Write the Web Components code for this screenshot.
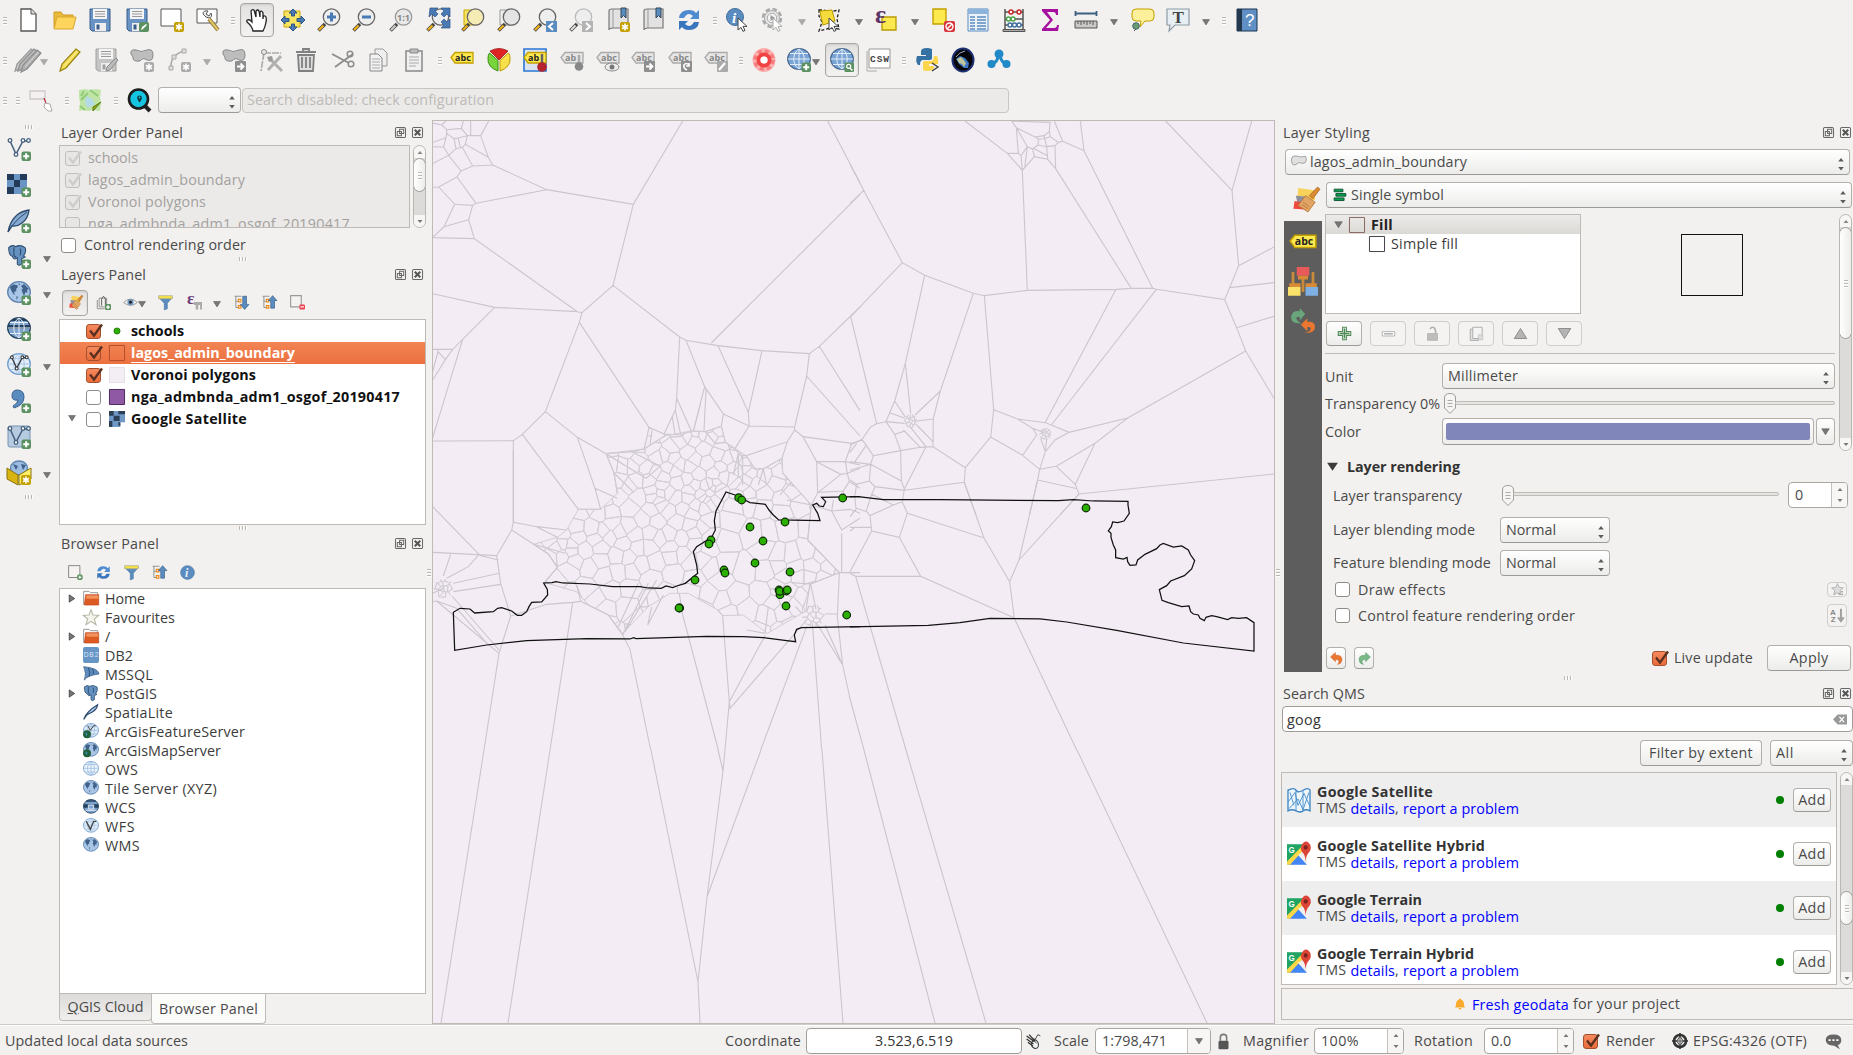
<!DOCTYPE html>
<html lang="en">
<head>
<meta charset="utf-8">
<title>QGIS</title>
<style>
html,body{margin:0;height:100%;overflow:hidden;background:#f2f1ef}
body{font-family:"Open Sans","Noto Sans",sans-serif;font-size:14px;color:#4a4a4a}
</style>
</head>
<body>
<q-window></q-window>
<script>
const FONT='"Open Sans","Noto Sans",sans-serif';
const def=(name,css,html)=>customElements.define(name,class extends HTMLElement{
  connectedCallback(){
    if(this.shadowRoot)return;
    const root=this.attachShadow({mode:'open'});
    root.innerHTML=`<style>:host{display:block;box-sizing:border-box}*{box-sizing:border-box}${css}</style>${html(this)}`;
  }
});
const at=(el,n,d='')=>el.hasAttribute(n)?el.getAttribute(n):d;

/* ---------- text label: spreads its letters over a given advance width ---------- */
const ctx=document.createElement('canvas').getContext('2d');
def('q-text','',el=>{
  const size=at(el,'s','14.3'),bold=el.hasAttribute('b')?700:400,w=+at(el,'w','0'),t=el.textContent;
  let ls=0;
  if(w){ctx.font=`${bold} ${size}px ${FONT}`;ls=(w-ctx.measureText(t).width)/t.length;}
  return `<style>:host{display:inline-block;flex:none;white-space:pre;line-height:18px;font-weight:${bold};font-size:${size}px;letter-spacing:${ls.toFixed(3)}px}</style><slot></slot>`;
});

/* ---------- icons, all on a 24x24 grid ---------- */
const plus='<rect x="14.5" y="14.5" width="9.5" height="9.5" rx="2" fill="#5b9160"/><path d="M19.2 16.3v6M16.2 19.3h6" stroke="#fff" stroke-width="2"/>';
const star='<rect x="14" y="14" width="10" height="10" rx="2" fill="#c4a000"/><path d="M19 15.5v7M16 17.2l6 3.6M22 17.2l-6 3.6" stroke="#fff" stroke-width="1.6"/>';
const gstar=star.replace('#c4a000','#aaa');
const lens=(f,s='#666',h='#f0b418')=>`<path d="M8 16L1.500 22.500" stroke="#444" stroke-width="3.600"/><path d="M6.500 17.500L2 22" stroke="${h}" stroke-width="2.200"/><circle cx="14.500" cy="9" r="8.200" fill="${f}" stroke="${s}" stroke-width="1.300"/>`;
const floppy=(c,d)=>`<path d="M2 1h20v22H4l-2-2z" fill="${c}" stroke="${d}"/><path d="M5 1h14v10H5z" fill="#f4f4f4"/><path d="M7 3.500h10M7 6h10M7 8.500h10" stroke="#999"/><path d="M7 15h11v8H7z" fill="#eee"/><path d="M8.500 16.500h3v5h-3z" fill="${d}"/>`;
const tag=(f,s,t='abc',c='#222')=>`<path d="M1 9.500L5 4.500h18v10.500H5z" fill="${f}" stroke="${s}" stroke-width="1.300"/><text x="5" y="13" font-family="Open Sans" font-weight="700" font-size="9" fill="${c}">${t}</text>`;
const gtag=tag('#e6e6e6','#aaa','abc','#888');
const globe=(f,s)=>`<ellipse cx="12" cy="11" rx="11.300" ry="10.300" fill="${f}" stroke="${s}" stroke-width="1.300"/>`;
const lats=c=>`<path d="M1 11h22M3 5.500h18M3 16.500h18M12 1v20M12 1C5 5 5 17 12 21M12 1c7 4 7 16 0 20" fill="none" stroke="${c}"/>`;
const land=c=>`<path d="M3 6l3-2.500 4 .5 1 2-2 2 .5 2-2.500 1 1 3-2-1.500L4 9zM14 5l3-2 2 2 3 3-2 1 .5 3-2-1-1.500 4-1.500-3.500-1-3 1.500-1zM9.500 15l1.500 1-1.500 3zM11 3l1.500-.5.5 2z" fill="${c}"/>`;
const vee=c=>`<path d="M3 4l6 13 7-13h5" fill="none" stroke="${c}" stroke-width="1.500"/><g fill="#fff" stroke="${c}" stroke-width="1.300"><circle cx="3" cy="3.500" r="1.800"/><circle cx="9" cy="17.500" r="1.800"/><circle cx="16" cy="3.500" r="1.800"/><circle cx="21.500" cy="3.500" r="1.800"/></g>`;
const cursor='<path d="M12 10v12l3-2.600 2 4 2-1-2-4h4z" fill="#fff" stroke="#444"/>';
const elephant='<path d="M2 3Q6-1 10 2Q15-1 21 3Q23 8 19 13l2 1-4 2v6q-3 3-5 0v-7Q8 18 6 13Q2 12 2 3z" fill="#6592c0" stroke="#2c4c70" stroke-width="1.200"/><path d="M8 3v8q0 3 3 3M15 4q2 3 0 8" fill="none" stroke="#2c4c70" stroke-width="1.300"/>';
const feather='<path d="M1 23Q3 12 10 6Q15 2 22 1Q21 10 15 14Q10 18 5 17z" fill="#86a9d2" stroke="#2c4a6c" stroke-width="1.300"/><path d="M1 23Q7 12 20 3" stroke="#2c4a6c" fill="none"/>';
const thin='<path d="M1 23Q5 11 22 1Q21 8 14 12Q8 15 6 16z" fill="#a9c5e6" stroke="#2c4a6c" stroke-width="1.800"/>';
const arrows2='<path d="M2 10Q3 2 12 2q5 0 7 3l3-3v9h-9l3-3q-5-5-9 2z" fill="#4f8bd0"/><path d="M22 14q-1 8-10 8-5 0-7-3l-3 3v-9h9l-3 3q5 5 9-2z" fill="#3a76bd"/>';
const funnel='<path d="M1 4h22l-8 9v9l-5 2V13z" fill="#5b8cc0" stroke="#44709d" stroke-width=".8"/><path d="M1 1h22v5H1z" fill="#f4e04a" stroke="#999" stroke-width=".8"/>';
const tree=u=>`<path d="M1 2h11M3 2v18h5M3 10h5" stroke="#777" fill="none" stroke-width="1.200"/><path d="M7 7h4v4H7zM7 17h4v4H7z" fill="#fff" stroke="#ee8a18" stroke-width="1.800"/>`+(u?'<path d="M17 1l7 8h-4v12h-6V9h-4z" fill="#5b8cc0" stroke="#2f567f"/>':'<path d="M17 23l7-8h-4V2h-6v13h-4z" fill="#5b8cc0" stroke="#2f567f"/>');
const folder='<path d="M1 22V2h8l2 2h11v6" fill="#fff" stroke="#999" stroke-width="1.500"/><path d="M4 7h19.500v15.500H2z" fill="#dd5a22" stroke="#c0431a" stroke-width="1"/><path d="M5 8h18v5H5z" fill="#f0935c"/>';
const blob=c=>`<path d="M1 6Q0 1 6 2Q11 5 17 2Q23 0 23 7Q23 14 17 12Q13 9 10 13Q2 14 3 9z" fill="${c}" stroke="#888"/>`;
const page='<path d="M5 1h10l5 5v17H5z" fill="#fff" stroke="#555" stroke-width="1.300"/><path d="M15 1v5h5" fill="#ddd" stroke="#555"/>';
const book='<path d="M3 3q0-2 3-2h16v19H7q-4 0-4 2z" fill="#e2e2e2" stroke="#777" stroke-width="1.200"/><path d="M7 1v19" stroke="#999"/><path d="M15 0h5v10l-2.500-2.500L15 10z" fill="#5b8cc0" stroke="#345"/>';
const pal='<path d="M6 1l13 2 1 9-15 0z" fill="#f8d25a"/><path d="M4 8l10 1 3 7-11 2z" fill="#8d8f9c"/><path d="M3 13l6 1 6 7-13-1z" fill="#ee4a3c"/><path d="M22 0l2 2-6 9-3-3z" fill="#d88a34" stroke="#a8641c" stroke-width=".6"/><path d="M12 8l8 6-6 9-8-6z" fill="#e2a565" stroke="#b77a3a" stroke-width=".8"/><path d="M10 14l5 4M9 16l5 4" stroke="#b77a3a" stroke-width=".8"/>';
const pencil=(a,b)=>`<path d="M18 1l4 3L8 20l-6 3 2-7z" fill="${a}" stroke="${b}" stroke-width="1.200"/><path d="M19.500 3L6 18" stroke="#fff" stroke-opacity=".5"/>`;
const I={
 file:page,
 open:'<path d="M2 20V4h7l2 3h10v3" fill="#e8b93c" stroke="#d09a20"/><path d="M5 9h19l-3 12H2z" fill="#fdd45c" stroke="#dca62c"/>',
 save:floppy('#6893c4','#385d8a'),
 saveas:floppy('#6893c4','#385d8a')+'<rect x="14" y="14" width="10" height="10" rx="2" fill="#5b9160"/><path d="M16 22l1-3 4-3 1 1-4 4z" fill="#fff"/>',
 newcomp:'<path d="M1 1h20v17H1z" fill="#fff" stroke="#555"/>'+star,
 composer:'<path d="M1 1h20v14H1z" fill="#fff" stroke="#555"/><path d="M7 6q0-4 5-3l-2 3 3 2 2-3q2 4-2 5L10 9z" fill="#eee" stroke="#555"/><path d="M13 11l9 11" stroke="#8d7830" stroke-width="4"/><path d="M13 11l9 11" stroke="#e2c66e" stroke-width="2"/>',
 hand:'<path d="M8 23q-1-5-6-9q-1-3 3-2l2 2L6 3q1-2 3-1l2 7V3q2-2 3 0l1 6V4q2-2 3 1v6q0-4 2-3 2 1 1 6-1 6-3 9z" fill="#fff" stroke="#222" stroke-width="1.300"/>',
 panmap:'<path d="M3 3h16v16H3z" fill="#f7e463" stroke="#c9a800"/><path d="M12 1l4 4h-2.500v3h-3V5H8zM12 23l4-4h-2.500v-3h-3v3H8zM0 12l4-4v2.500h4v3H4V16zM24 12l-4-4v2.500h-4v3h4V16z" fill="#4a7ab5" stroke="#2e5487"/>',
 zin:lens('#eee')+'<path d="M14.500 4.500v9M10 9h9" stroke="#4a7ab5" stroke-width="3"/>',
 zout:lens('#eee')+'<path d="M10 9h9" stroke="#4a7ab5" stroke-width="3"/>',
 z11:lens('#e8e8e8','#999','#ccc')+'<text x="8" y="12.500" font-size="9" font-family="Open Sans" font-weight="700" fill="#888">1:1</text>',
 zfull:lens('#eee')+'<path d="M4 0h8L9 3l3 3-3 3-3-3-3 3zM24 0v9l-3-3-3 3-3-3 3-3-3-3zM24 20h-9l3-3-3-3 3-3 3 3 3-3z" fill="#4a7ab5" stroke="#2e5487" stroke-width=".7"/>',
 zsel:'<path d="M3 2h13v15H3z" fill="#f7e463" stroke="#c9a800"/>'+lens('#f4ecb4'),
 zlay:'<path d="M3 2h13v15H3z" fill="#eee" stroke="#999"/>'+lens('#e4e4e4'),
 zlast:lens('#eee')+'<path d="M13 13h11v11H13z" fill="#5b8cc0"/><path d="M20 15l-4 3.500 4 3.500" fill="none" stroke="#fff" stroke-width="2"/>',
 znext:lens('#eee','#bbb','#ddd')+'<path d="M13 13h11v11H13z" fill="#b4b4b4"/><path d="M17 15l4 3.500-4 3.500" fill="none" stroke="#fff" stroke-width="2"/>',
 newbook:book+star, book, refresh:arrows2,
 identify:'<circle cx="9" cy="9" r="8.500" fill="#5b8cc0" stroke="#44709d"/><text x="6" y="14.500" font-size="15" font-style="italic" font-weight="700" font-family="Liberation Serif" fill="#fff">i</text>'+cursor,
 gear:'<circle cx="11" cy="10" r="9" fill="none" stroke="#aaa" stroke-width="2.500" stroke-dasharray="4.500 2.600"/><circle cx="11" cy="10" r="7.500" fill="#e6e6e6" stroke="#aaa"/><circle cx="11" cy="10" r="4.800" fill="#f2f2f2" stroke="#aaa"/><path d="M9.500 7l4.500 3-4.500 3z" fill="#999"/>'+cursor.replace('#444','#aaa'),
 select:'<path d="M2 2h5l5 2 10-2-2 9 2 10-9-1-11 3 3-9-3-6z" fill="none" stroke="#222" stroke-width="1.300" stroke-dasharray="3 2"/><path d="M3 3l12-1 3 11-12 4-2-8z" fill="#f5dc3c" stroke="#b99a00"/>'+cursor,
 selexp:'<path d="M7 9h14v13H7z" fill="#fce94f" stroke="#b99a00" stroke-width="1.300"/><text x="0" y="15" font-size="26" font-weight="700" font-family="Liberation Serif" fill="#5c3566">ε</text>',
 desel:'<path d="M2 1h13v15H2z" fill="#fce94f" stroke="#c4a000" stroke-width="1.400"/><rect x="13" y="13" width="11" height="11" rx="2" fill="#d8343c"/><circle cx="18.500" cy="18.500" r="3.500" fill="none" stroke="#fff" stroke-width="1.400"/><path d="M16 21l5-5" stroke="#fff" stroke-width="1.400"/>',
 table:'<path d="M2 1h20v22H2z" fill="#eaf1f8" stroke="#5b8cc0"/><path d="M2 1h20v5H2z" fill="#8fb4dc"/><path d="M4 9h5M11 9h9M4 12h5M11 12h9M4 15h5M11 15h9M4 18h5M11 18h9M4 21h5M11 21h9" stroke="#5b8cc0" stroke-width="1.400"/>',
 abacus:'<path d="M3 1v21M21 1v21M3 4h18M3 11h18M3 17h18" stroke="#555" stroke-width="1.500"/><path d="M1 21.500h22v2H1z" fill="#aaa" stroke="#555"/><g fill="#fff" stroke-width="1.500"><g stroke="#cc2222"><circle cx="9" cy="4" r="2"/><circle cx="17" cy="4" r="2"/></g><g stroke="#4aa44a"><circle cx="6.500" cy="11" r="2"/><circle cx="11" cy="11" r="2"/></g><g stroke="#3f6f9f"><circle cx="8" cy="17" r="2"/><circle cx="12.500" cy="17" r="2"/><circle cx="17" cy="17" r="2"/></g></g>',
 sigma:'<path d="M4 1h16v6h-2q0-3-3-3H9l6 8-7 8h8q3 0 3-3h2l-1 6H4v-2l8-9-8-9z" fill="#a6109e"/>',
 ruler:'<path d="M1 5.500h22M1.500 3v5M22.500 3v5" stroke="#3d6080" stroke-width="1.800"/><path d="M1 13h22v7H1z" fill="#c8c8c8" stroke="#555"/><path d="M4 13v3M7 13v4M10 13v3M13 13v4M16 13v3M19 13v4" stroke="#555"/>',
 tip:'<path d="M6 1h14q4 0 4 4v4q0 4-4 4h-5l-5 6 1-6H6q-4 0-4-4V5q0-4 4-4z" fill="#fdf09a" stroke="#c4a000"/><circle cx="6" cy="18" r="3.300" fill="#6a9b6e" stroke="#467"/><path d="M6 21l-2 2" stroke="#555"/>',
 textann:'<path d="M1 1h22v16H9l-6 6 1-6H1z" fill="#e8eff3" stroke="#8c9ba5" stroke-width="1.200"/><text x="6.500" y="15" font-size="17" font-family="Liberation Serif" font-weight="700" fill="#444">T</text>',
 help:'<path d="M2 1h20v22H2z" fill="#5f8fc4" stroke="#1d3450"/><path d="M2 1h5v22H2z" fill="#22384f"/><text x="10" y="18" font-size="17" font-family="Liberation Sans" fill="#fff">?</text>',
 pencils:'<g transform="translate(-3 0)">'+pencil('#c4c4c4','#999')+'</g><g>'+pencil('#b8b8b8','#909090')+'</g><g transform="translate(3 1)">'+pencil('#b0b0b0','#8c8c8c')+'</g>',
 pencil:pencil('#f4dd52','#9a8414'),
 savegrey:floppy('#c4c4c4','#a0a0a0')+'<path d="M22 10l2 2-8 10-4 1 1-4z" fill="#bbb" stroke="#888"/>',
 addpoly:blob('#bdbdbd')+gstar,
 addcurve:'<path d="M4 20Q3 7 17 3" fill="none" stroke="#aaa" stroke-width="1.500"/><path d="M2 18h4v4H2zM15 1h4v4h-4zM5 7h4v4H5z" fill="#ddd" stroke="#aaa"/>'+gstar,
 movef:blob('#bdbdbd')+'<rect x="13" y="13" width="11" height="11" rx="1" fill="#8e8e8e"/><path d="M15 18.500h6M18.500 15.500l3 3-3 3" stroke="#fff" stroke-width="1.800" fill="none"/>',
 node:'<path d="M5 5h17M5 5L2 23" stroke="#aaa" stroke-width="1.600" stroke-dasharray="7 1"/><circle cx="5" cy="4" r="2.500" fill="#e8e8e8" stroke="#888"/><path d="M9 22L22 8M12 12l11 11" stroke="#b0b0b0" stroke-width="3"/><path d="M8 9l5-1 1 4-4 2z" fill="#999"/>',
 trash:'<path d="M4 7h16l-1 16H5zM2 4h20M9 3V1h6v2" fill="#ddd" stroke="#808080" stroke-width="1.800"/><path d="M8 9v11M12 9v11M16 9v11" stroke="#808080" stroke-width="1.800"/>',
 cut:'<path d="M1 6l17 9M4 19L22 6" stroke="#8c8c8c" stroke-width="1.800"/><circle cx="20" cy="16" r="2.800" fill="none" stroke="#8c8c8c" stroke-width="1.500"/><circle cx="19" cy="6" r="2.800" fill="none" stroke="#8c8c8c" stroke-width="1.500"/>',
 copy:'<path d="M9 1h8l4 4v13H9z" fill="#eee" stroke="#999"/><path d="M4 6h8l4 4v13H4z" fill="#f2f2f2" stroke="#888"/><path d="M6 11h8M6 14h8M6 17h8M6 20h8" stroke="#aaa"/>',
 paste:'<path d="M4 3h16v20H4z" fill="#f0f0f0" stroke="#888" stroke-width="1.500"/><path d="M8 1h8v4H8z" fill="#bbb" stroke="#888"/><path d="M7 9h10M7 12h10M7 15h10M7 18h7" stroke="#aaa"/>',
 label:tag('#fce94f','#c4a000'),
 pie:'<path d="M12 12L3 3Q12-2 21 3z" fill="#e02424" stroke="#9c1414" stroke-width=".8"/><path d="M11 12.500V23Q0 19 1 10 1 7 2.500 5z" fill="#78d43a" stroke="#3c8c14"/><path d="M13 12.500V23q11-4 10-13 0-3-1.500-5z" fill="#f9e04a" stroke="#b99a00"/>',
 labelmove:'<path d="M1 1h22v22H1z" fill="#dbe4ee" stroke="#2a76d4" stroke-width="1.600"/>'+tag('#fce94f','#c4a000','ab')+'<path d="M19 6v10" stroke="#666" stroke-width="2.500"/><circle cx="19" cy="19" r="4.800" fill="#b4242c"/>',
 tpin:tag('#e6e6e6','#aaa','ab','#888')+'<path d="M19 7v9" stroke="#aaa" stroke-width="2.500"/><circle cx="19" cy="18.500" r="4.300" fill="#888"/>',
 teye:gtag+'<ellipse cx="16" cy="19" rx="7" ry="4" fill="#eee" stroke="#888"/><circle cx="16" cy="19" r="2.500" fill="#777"/>',
 tmove:gtag+'<rect x="13" y="13" width="11" height="11" rx="1" fill="#8e8e8e"/><path d="M15 18.500h6M18.500 15.500l3 3-3 3" stroke="#fff" stroke-width="1.800" fill="none"/>',
 trot:gtag+'<rect x="13" y="13" width="11" height="11" rx="1" fill="#8e8e8e"/><path d="M21 17q-3-3-5 0-1 3 3 5M21 15v3h-3" stroke="#fff" stroke-width="1.600" fill="none"/>',
 tedit:gtag+'<rect x="13" y="13" width="11" height="11" rx="1" fill="#aaa"/><path d="M15 22l6-7" stroke="#fff" stroke-width="2.200"/>',
 red:'<ellipse cx="12" cy="12" rx="11.500" ry="12" fill="#fbb0b0"/><circle cx="12" cy="12" r="8.800" fill="none" stroke="#f77c7c" stroke-width="4" stroke-dasharray="4 3"/><circle cx="12" cy="12" r="5.500" fill="none" stroke="#f04444" stroke-width="4"/><circle cx="12" cy="12" r="3.600" fill="#fff"/>',
 qms:globe('#78a4d6','#4a6c94')+lats('#e4edf6')+plus,
 qmss:globe('#78a4d6','#4a6c94')+lats('#e4edf6')+'<rect x="14.500" y="14.500" width="9.500" height="9.500" rx="1" fill="#5b9160"/><circle cx="18.700" cy="18.300" r="2" fill="none" stroke="#fff" stroke-width="1.200"/><path d="M20 20l2.500 2.500" stroke="#fff" stroke-width="1.500"/>',
 csw:'<path d="M0 3v20h10" stroke="#aaa" fill="none"/><path d="M2 1h21v19H2z" fill="#fff" stroke="#999"/><text x="3" y="14" font-size="9.500" font-family="Liberation Mono" font-weight="700" textLength="19" fill="#444">CSW</text>',
 python:'<path d="M7 1q5-2 10 0v9q0 2-3 2H8q-3 0-3 5H3q-3-4-1-9h9V7H6V3z" fill="#3571a3"/><path d="M17 22q-5 2-9 0v-8q0-1 3-1h5q3 0 3-5h3q2 4 1 8h-9v2h5v2z" fill="#fbd64a"/><path d="M17 15l6 4-6 4" stroke="#444" stroke-width="1.500" fill="none"/>',
 earth:'<ellipse cx="12" cy="12" rx="10.500" ry="11.500" fill="#060608" stroke="#1c2e70" stroke-width="2"/><path d="M5 11l4-3 5 2 4 5-1 5-4 0-5-4z" fill="#3e78c0"/><path d="M6 11l4-2 2 2 3 4-2 4-2-3-3-1z" fill="#c0c49a"/><path d="M5 9q3-5 9-6" stroke="#9aa6c8" fill="none"/>',
 share:'<path d="M5 16Q11 14 11 7M19 16q-5-2-6-9" fill="none" stroke="#2189c8" stroke-width="3"/><circle cx="12" cy="6" r="4.500" fill="#2189c8"/><circle cx="4.500" cy="16" r="4" fill="#2189c8"/><circle cx="19.500" cy="16" r="4" fill="#2189c8"/>',
 recthand:'<path d="M1 3h15v8H1z" fill="none" stroke="#cfc8cf" stroke-width="1.300"/><path d="M15 10l3 8" stroke="#b23" stroke-width="1.200"/><path d="M16 15l5 1 2 7h-4l-4-4z" fill="#fff" stroke="#aaa"/>',
 osm:'<path d="M1 2l6-1 5 1 6-1 5 1-1 7 1 6-1 8-7-1-5 1-5-1-4 1 1-8-1-6z" fill="#bfe4a6"/><path d="M8 8l6 3 3 5-7 4-3-5z" fill="#b4dae8"/><path d="M12 2l8 6M3 12l7-7M2 18l5 4M6 3l-3 5" stroke="#8ccb72" stroke-width="1.800"/><path d="M23 14l-8 9 0-4z" fill="#8cab1c" stroke="#5d7c10"/>',
 mag:'<path d="M17 17l6 6" stroke="#222" stroke-width="4"/><circle cx="11.500" cy="11" r="9.500" fill="#14c4e0" stroke="#1c1c1c" stroke-width="2.600"/><path d="M12.500 14.500q-2.500-3.500-2.500-5 .5-2 2.500-2t2.500 2q0 1.500-2.500 5z" fill="#14333a"/><circle cx="12.500" cy="9.500" r=".9" fill="#14c4e0"/>',
 vec:vee('#44607e')+plus,
 ras:'<path d="M0 1h20v20H0z" fill="#6a94c4"/><path d="M0 1h7v6H0zM13 1h7v6h-7zM7 7h6v7H7zM0 14h7v7H0z" fill="#233a58"/>'+plus,
 spl:feather+plus, pg:'<g transform="scale(.86)">'+elephant+'</g>'+plus,
 wms:globe('#a9c5e6','#5b83ae')+land('#3f618a')+plus,
 wcs:globe('#7ba3d0','#23405f')+'<path d="M1 8h22v4H1zM5 2h14v2H5z" fill="#23405f"/>'+lats('#e8eef5')+plus,
 wfs:globe('#e2edf8','#6f9ccd')+lats('#a9c7e8')+'<g transform="translate(2.500 1.500) scale(.8)">'+vee('#333')+'</g>'+plus,
 comma:'<path d="M10 1q7 0 7 7 0 8-10 11l-1-2q5-3 5-6-6 1-6-4 0-6 5-6z" fill="#5b8cc0" stroke="#3a618c"/>'+plus,
 vrt:'<rect x="1" y="1" width="22" height="21" rx="2" fill="#b7cbe0" stroke="#7793b0"/>'+vee('#44607e')+plus,
 gpkg:globe('#9dbce0','#5b83ae').replace('cy="11" rx="11.300" ry="10.300"','cy="7" rx="8.500" ry="7"')+'<path d="M6 3l5 2-2 4zM14 3l5 1-3 5z" fill="#3f618a"/><path d="M0 7l11 7v10L0 18z" fill="#d9b310" stroke="#8a7310"/><path d="M24 7l-12 7v10l12-6z" fill="#fcf06a" stroke="#8a7310"/>'+star,
 style:pal,
 addgroup:'<path d="M2 8v14h12M5 5v14h12V5z" fill="none" stroke="#888" stroke-width="1.400"/><path d="M9 17V6l3-4 3 4v11" fill="none" stroke="#555" stroke-width="1.500"/>'+plus,
 eye:'<path d="M1 12Q12 1 23 12 12 21 1 12z" fill="#f6f6f6" stroke="#888" stroke-width="1.300"/><circle cx="12" cy="11.500" r="5" fill="#7296bc"/><circle cx="12" cy="11.500" r="2.300" fill="#222"/>',
 funnel,
 epsf:'<text x="0" y="14" font-size="28" font-weight="700" font-family="Liberation Serif" fill="#6d3f7a">ε</text><path d="M11 11h13v12h-3v-7h-3v7h-4v-7h-3z" fill="#aaa"/>',
 expand:tree(0),collapse:tree(1),
 rem:'<path d="M1 1h17v18H1z" fill="#f4f3f2" stroke="#999" stroke-width="1.800"/><rect x="15" y="15" width="9" height="8" rx="2" fill="#ef4050"/><path d="M16.500 19h6" stroke="#fff" stroke-width="1.800"/>',
 addl:'<path d="M1 1h18v19H1z" fill="#f4f3f2" stroke="#888" stroke-width="1.600"/><circle cx="19" cy="19.500" r="4.600" fill="#5b9160"/><path d="M19 17v5M16.500 19.500h5" stroke="#fff" stroke-width="1.600"/>',
 info:'<circle cx="12" cy="12" r="11" fill="#5b8cc0" stroke="#44709d"/><text x="8" y="19" font-size="19" font-style="italic" font-weight="700" font-family="Liberation Serif" fill="#e8f0f8">i</text>',
 folder,
 fav:'<path d="M12 1l3 8 8.500.500-6.500 5.500 2.500 8.500-7.500-5-7.500 5L7 15 .5 9.500 9 9z" fill="#f4f4ec" stroke="#b6b6a4" stroke-width="1.600"/>',
 db2:'<rect width="24" height="24" rx="3" fill="#6795c5"/><text x="1" y="15" font-size="10" textLength="22" font-family="Liberation Sans" fill="#dce9f6">DB2</text>',
 mssql:'<path d="M1 1q5 10 1 20 5-7 22-9-1-9-23-11z" fill="#5d8cc0" stroke="#2f4f74"/><path d="M8 3q4 6 1 13M14 4q3 4 1 9" stroke="#2f4f74" fill="none" stroke-width="1.500"/>',
 elephant,feather:thin,
 afs:globe('#e2edf8','#6f9ccd')+lats('#8fb4dc')+'<path d="M7 4l4 7 5-7h3" stroke="#444" fill="none" stroke-width="1.500"/><circle cx="6" cy="17" r="6" fill="#20603a"/><path d="M3 14l4 2-2 4z" fill="#3c8ac4"/>',
 ams:globe('#a9c5e6','#5b83ae')+land('#3f618a')+'<circle cx="6" cy="17" r="6" fill="#20603a"/><path d="M3 14l4 2-2 4z" fill="#3c8ac4"/>',
 ows:globe('#eef5fc','#6f9ccd')+lats('#8fb4dc'),
 xyz:globe('#a9c5e6','#5b83ae')+land('#3f618a'),
 wcs0:globe('#7ba3d0','#23405f')+'<path d="M1 8h22v5H1zM5 2h14v2H5z" fill="#23405f"/><path d="M8 9h8v6H8zM4 17h16" stroke="#e8eef5" fill="#7ba3d0" stroke-width="1.400"/>',
 wfs0:globe('#e2edf8','#6f9ccd')+lats('#a9c7e8')+'<path d="M5 5l6 12 5-12h4" stroke="#444" stroke-width="2" fill="none"/>',
 polyg:'<path d="M2 5q4-3 8-1 5 2 12 0 2 5 0 10-4 4-8 1-4-1-5 2-4 4-7 0Q-1 10 2 5z" fill="#e0e0e0" stroke="#999" stroke-width="1.400"/>',
 single:'<g fill="#0aa050" stroke="#074a2a" stroke-width="1.500"><path d="M2 2h15v4.500H2zM5 9.500h17V14H5zM2 17h17v4.500H2z"/></g>',
 brushes:'<path d="M4 4v10M12 8v12M20 4v10" stroke="#c98a3a" stroke-width="2.200"/><path d="M7 0h10v7H7z" fill="#e85a5a"/><path d="M8 7h8v3H8z" fill="#d88a34"/><path d="M0 16h10v7H0z" fill="#fbe26a"/><path d="M1 13h9v3H1zM14 13h9v3h-9z" fill="#d88a34"/><path d="M14 16h10v7H14z" fill="#7fb0e4"/>',
 hist:'<path d="M11 14Q1 15 1 8 2 2 9 3V0l5 5.500-5 6V8Q5 8 6 10q1 3 5 4z" fill="#6aa67c"/><path d="M13 23q11 1 10-7-2-4-7-3V9.500l-6 6 6 6v-4q4 0 3 2-1 3-6 3.500z" fill="#ea7630"/>',
 add:'<path d="M9 2h6v7h7v6h-7v7H9v-7H2V9h7z" fill="#fff" stroke="#4f8a56" stroke-width="1.700"/><path d="M12 4v16M4 12h16" stroke="#4f8a56" stroke-width="2.600"/>',
 minus:'<path d="M2 9h20v7H2z" fill="#fff" stroke="#b0b0b0" stroke-width="1.500"/><path d="M5 12.500h14" stroke="#b0b0b0" stroke-width="2.500"/>',
 unlock:'<path d="M4 12h16v11H4z" fill="#bdbdbd" stroke="#a8a8a8"/><path d="M8 5q3-5 7-2 2 2 2 9" fill="none" stroke="#b0b0b0" stroke-width="2.500"/>',
 dup:'<path d="M2 5h13v18H2z" fill="#e2e2e2" stroke="#aaa" stroke-width="1.500"/><path d="M6 2h15v18H6z" fill="#f4f4f4" stroke="#aaa" stroke-width="1.500"/><path d="M15 14h7v8h-7z" fill="#ddd" stroke="#bbb"/>',
 up:'<path d="M12 4l10 16H2z" fill="#b4b4b4" stroke="#8e8e8e" stroke-width="1.600"/>',
 down:'<path d="M12 20L22 4H2z" fill="#b4b4b4" stroke="#8e8e8e" stroke-width="1.600"/>',
 undo:'<path d="M1 9l9-8v5q13-1 12 9-1 7-8 8 4-4 2-7-2-3-6-2v4z" fill="#ea7630" stroke="#c85a18" stroke-width=".8"/>',
 redo:'<path d="M23 9l-9-8v5Q1 5 2 15q1 7 8 8-4-4-2-7 2-3 6-2v4z" fill="#7ab888" stroke="#4e8f5e" stroke-width=".8"/>',
 fx:'<path d="M12 1l3 7 8 1-6 5 2 8-7-4-7 4 2-8-6-5 8-1z" fill="#ddd" stroke="#aaa" stroke-width="1.500"/><path d="M14 20h3M19 16h3M20 21h2" stroke="#888" stroke-width="2"/>',
 az:'<text x="0" y="11" font-size="13" font-weight="700" font-family="Liberation Sans" fill="#8a8a8a">A</text><text x="1" y="23" font-size="13" font-weight="700" font-family="Liberation Sans" fill="#8a8a8a">Z</text><path d="M17.500 1v18M13 15l4.500 6 4.500-6" stroke="#a0a0a0" stroke-width="3.200" fill="none"/>',
 gmap:'<path d="M1 3q6-3 8 0t7 0 7 0v19q-4-2-7 0t-7 0-8 0z" fill="#eef6fc" stroke="#3c84c4" stroke-width="1.300"/><path d="M9 3v19M16 3v19M1 14L8 5l3 12 6-11 6 12M2 20l9-9 5 10 6-16M3 5l4 12" fill="none" stroke="#4a90cc" stroke-width=".9"/>',
 gm:'<path d="M0 3h20v19H0z" fill="#e8e8e6"/><path d="M0 3h17L0 22z" fill="#1fa463"/><path d="M0 22l10-10 10 10z" fill="#4285f4"/><path d="M0 19L16 4l2 3L3 22H0z" fill="#ffd84a"/><path d="M11 12l9 10V12z" fill="#f2f2f2"/><text x="1.500" y="11" font-size="8" font-family="Liberation Sans" font-weight="700" fill="#fff">G</text><path d="M18.500 19q0-6-3.500-9-2-3-.5-6 2-3.500 4.500-3.500t4.500 3.500q1 3-1 6-3.500 3-4 9z" fill="#db4437"/><circle cx="18.700" cy="6" r="2" fill="#7b231c"/>',
 bell:'<path d="M12 1q2 0 2 2 6 2 6 9 0 4 2 7H2q2-3 2-7 0-7 6-9 0-2 2-2zM9 20h6q-1 3-3 3t-3-3z" fill="#f9a92b"/>',
 mouse:'<path d="M13 8q7 3 7 10-1 6-6 5-6-2-5-9z" fill="#f4f4f4" stroke="#444" stroke-width="1.800"/><path d="M1 3l12 9M5 1l10 11M1 8l11 8M3 13l8 6" stroke="#333" stroke-width="2"/><path d="M15 8l4-7 4 2M14 12l3 3" stroke="#444" stroke-width="1.500" fill="none"/>',
 lock:'<path d="M7 11V6q0-4 5-4t5 4v5" fill="none" stroke="#777" stroke-width="2.500"/><rect x="4" y="11" width="16" height="12" rx="2" fill="#555"/>',
 crs:'<circle cx="12" cy="12" r="9" fill="none" stroke="#333" stroke-width="4"/><path d="M12 0v24M0 12h24" stroke="#333" stroke-width="2.500"/><path d="M12 5l5 7-5 7-5-7z" stroke="#444" stroke-width="1.500" fill="#ddd"/><path d="M12 5v14M7 12h10" stroke="#444" stroke-width="1.200"/>',
 msg:'<path d="M12 2q11 0 11 8 0 6-5 7l3 6-8-5Q1 18 1 10 1 2 12 2z" fill="#666"/><path d="M5 10h3M10.500 10h3M16 10h3" stroke="#fff" stroke-width="2.500"/>',
 clear:'<path d="M8 1h16v22H8L0 12z" fill="#999"/><path d="M11 6l8 12M19 6l-8 12" stroke="#fff" stroke-width="2.500"/>',
 float:'<rect x="1" y="1" width="22" height="22" rx="3" fill="none" stroke="#666" stroke-width="2.200"/><path d="M10 5h9v9h-9zM5 10h9v9H5z" fill="none" stroke="#666" stroke-width="2.200"/>',
 close:'<rect x="1" y="1" width="22" height="22" rx="3" fill="none" stroke="#666" stroke-width="2.200"/><path d="M6 6l12 12M18 6L6 18" stroke="#555" stroke-width="4.500"/>',
 sat:'<path d="M0 0h24v17h-7v7H0z" fill="#7098c6"/><path d="M0 0h7v7H0zM14 0h10v5H14zM7 7h9v8H7zM0 15h5v9H0zM14 17h3v5h-3z" fill="#2b3f55"/>',
 dot:'<circle cx="12" cy="12" r="4.600" fill="#2bb000" stroke="#1c6e00" stroke-width="1.200"/>',
 sq0:'<path d="M.7.7h22.600v22.600H.7z" fill="none" stroke="#b4502c" stroke-width="1.500"/>',
 sq1:'<path d="M.7.7h22.600v22.600H.7z" fill="#f3edf4" stroke="#e4dfe6" stroke-width="1.500"/>',
 sq2:'<path d="M.7.7h22.600v22.600H.7z" fill="#9059a4" stroke="#4f2c5e" stroke-width="1.500"/>',
 sq3:'<path d="M.7.7h22.600v22.600H.7z" fill="none" stroke="#8a6a62" stroke-width="1.500"/>',
 sq4:'<path d="M.7.7h22.600v22.600H.7z" fill="#fff" stroke="#444" stroke-width="1.500"/>',
 d:'<path d="M5 7h14l-7 11z" fill="#777" stroke="#555"/>',
 dl:'<path d="M5 7h14l-7 11z" fill="#aaa" stroke="#999"/>',
 r:'<path d="M7 4l12 8-12 8z" fill="#777" stroke="#333" stroke-width="1.500"/>',
 D:'<path d="M2 5h20l-10 15z" fill="#3c3c3c"/>'
};
def('q-icon','svg{display:block;width:100%;height:100%;overflow:visible}',el=>{
  const s=+at(el,'s','24'),h=+at(el,'h',s);
  return `<style>:host{width:${s}px;height:${h}px;flex:none}</style><svg viewBox="0 0 24 24" preserveAspectRatio="none">${I[at(el,'n')]||''}</svg>`;
});
def('q-grip',`:host{display:flex;gap:2px;flex:none;align-items:center;justify-content:center}
 :host([v]){flex-direction:column}i{width:1px;height:4px;background:#bbb8b4;box-shadow:1px 0 #fff}:host([v]) i{width:4px;height:1px;box-shadow:0 1px #fff}`,()=>'<i></i><i></i><i></i>');

/* ---------- toolbar: a spec of "name:centre[:size]" laid out in one flex row ---------- */
def('q-toolbar',`:host{display:flex;align-items:center;height:40px;flex:none}
 .on{display:flex;align-items:center;justify-content:center;border:1px solid #aaa7a3;border-radius:4px;background:linear-gradient(#e2e1df,#f3f2f1);box-shadow:inset 0 1px 2px #ccc}`,el=>{
  let x=+at(el,'x0','0'),size=+at(el,'s','24'),out='';
  for(const it of at(el,'items').trim().split(/\s+/)){
    const [n,c,bs]=it.split(':');
    let w=n==='|'?6:(n==='d'||n==='dl')?12:bs?+bs:size;
    const m=(+c-w/2-x).toFixed(1);x=+c+w/2;
    if(n==='|')out+=`<q-grip v style="width:6px;margin-left:${m}px"></q-grip>`;
    else if(bs)out+=`<div class="on" style="width:${w}px;height:${w}px;margin-left:${m}px"><q-icon n="${n}" s="${w>30?size:15}"></q-icon></div>`;
    else out+=`<q-icon n="${n}" s="${w}" style="margin-left:${m}px;${n[0]==='d'&&n.length<3?'margin-top:3px':''}"></q-icon>`;
  }
  return out+'<slot></slot>';
});
def('q-check',`:host{width:15px;height:15px;flex:none;border:1px solid #8f8b87;border-radius:3px;background:#fff}
 :host([on]){background:linear-gradient(#f58a5e,#ea6b3a);border-color:#a3502f}:host([off]){opacity:.45;background:#e4e3e1}
 svg{display:block;margin:-3px 0 0 -1px;overflow:visible}`,el=>el.hasAttribute('on')||el.hasAttribute('tick')?`<svg width="17" height="17"><path d="M4 8.500l4 5L16 2.500" fill="none" stroke="${el.hasAttribute('tick')?'#aaa':'#5c3020'}" stroke-width="2.400"/></svg>`:'');
def('q-combo',`:host{display:flex;align-items:center;height:26px;border:1px solid #b3afab;border-bottom-color:#9d9995;border-radius:4px;background:linear-gradient(#fff,#ececea);padding:0 4px 0 5px;flex:none}
 .g{flex:1}svg{display:block;margin-top:4px}`,()=>'<slot></slot><span class="g"></span><svg width="8" height="14"><path d="M4 1l2.800 3.500H1.200zM4 13.500L6.800 10H1.200z" fill="#5c5c5c"/></svg>');
def('q-button',`:host{display:flex;align-items:center;justify-content:center;border:1px solid #b3afab;border-bottom-color:#9d9995;border-radius:4px;background:linear-gradient(#fff,#ececea);flex:none}
 :host([off]){border-color:#d0cdca;background:#f4f3f2}`,()=>'<slot></slot>');
def('q-spin',`:host{display:flex;height:26px;border:1px solid #aaa6a2;border-radius:4px;background:#fff;overflow:hidden;flex:none}
 .v{flex:1;display:flex;align-items:center;padding-left:6px}.b{width:16px;border-left:1px solid #c4c1bd;background:#f7f6f5;display:flex;align-items:center;justify-content:center}`,el=>`<div class="v"><slot></slot></div><div class="b" style="width:${at(el,'bw','16')}px">${el.hasAttribute('drop')?'<q-icon n="d" s="12"></q-icon>':'<svg width="8" height="18"><path d="M4 2l2.500 3h-5zM4 16l2.500-3h-5z" fill="#777"/></svg>'}</div>`);
def('q-title',`:host{display:flex;align-items:center;height:26px;flex:none;padding:0 3px 0 2px}.g{flex:1}.i{display:flex;gap:6px;margin-top:-1px}`,()=>'<slot></slot><span class="g"></span><div class="i"><q-icon n="float" s="11"></q-icon><q-icon n="close" s="11"></q-icon></div>');
def('q-scroll',`:host{display:flex;flex-direction:column;width:13px;border:1px solid #bab6b2;border-radius:7px;background:#dddbd9;flex:none;overflow:hidden}
 .c{height:12px;background:#f7f6f5;display:flex;align-items:center;justify-content:center;flex:none}.t{display:flex;border:1px solid #a19d99;margin:0 -1px;border-radius:7px;background:linear-gradient(90deg,#fff,#ececea);align-items:center;justify-content:center;flex:none}.g{flex:1}`,el=>`<div class="c"><svg width="6" height="5"><path d="M3 1l2.500 3h-5z" fill="#888"/></svg></div><div class="t" style="margin-top:${at(el,'top','0')}px;height:${at(el,'len')}px"><q-grip v></q-grip></div><div class="g"></div><div class="c"><svg width="6" height="5"><path d="M3 4l2.500-3h-5z" fill="#777"/></svg></div>`);
def('q-slider',`:host{display:flex;align-items:center;height:22px;flex:none}.l{flex:1;height:4px;border:1px solid #c0bdb9;border-radius:2px;background:#e6e4e2;margin:-2px 0 0 -1px}svg{flex:none}`,()=>'<svg width="12" height="21"><path d="M.5 5q0-4.500 5.500-4.500T11.500 5v10L6 20.500.5 15z" fill="#f6f5f4" stroke="#a09c98"/><path d="M3.500 7.500h5M3.500 10.500h5M3.500 13.500h5" stroke="#aaa"/></svg><div class="l"></div>');
def('q-layer',`:host{display:flex;align-items:center;height:22px;padding-left:8px;color:#111}
 :host([sel]){background:linear-gradient(#f28453,#ec7040);color:#fff}:host([sel]) .u{border-bottom:1px solid #fff}.u{display:flex;height:19px;align-items:center}.a{width:18px}.i{margin:0 6px 0 8px}`,el=>`<div class="a">${el.hasAttribute('open')?'<q-icon n="d" s="12" style="margin-left:-2px;margin-top:-3px"></q-icon>':''}</div><q-check ${el.hasAttribute('on')?'on':''}></q-check><q-icon class="i" n="${at(el,'icon')}" s="16"></q-icon><div class="u"><slot></slot></div>`);
def('q-node',`:host{display:flex;align-items:center;height:19.050px;color:#3c3c3c;padding-left:6px}.a{width:17px}q-icon.i{margin-right:6px;margin-top:-2px}`,el=>`<div class="a">${el.hasAttribute('kids')?'<q-icon n="r" s="11"></q-icon>':''}</div><q-icon class="i" n="${at(el,'icon')}" s="16"></q-icon><slot></slot>`);
def('q-order',`:host{display:flex;align-items:center;height:22px;padding-left:5px;gap:8px;color:#a3a19f}`,el=>`<q-check off ${el.hasAttribute('tick')?'tick':''}></q-check><slot></slot>`);
def('q-row',`:host{display:flex;align-items:center;flex:none}`,()=>'<slot></slot>');
def('q-service',`:host{display:flex;align-items:center;height:54px;flex:none;padding:0 5px 0 5px;background:#fff}:host([alt]){background:#eee}
 .t{margin-left:6px;margin-top:-2px;flex:1;display:flex;flex-direction:column}.t div{height:17px;display:flex;white-space:pre}a{color:#00f}.dot{width:8px;height:8px;border-radius:50%;background:#007f00;margin-right:9px}.t b{color:#333}`,el=>`<q-icon n="${at(el,'icon')}" s="24" h="26"></q-icon><div class="t"><div><b><q-text b w="${at(el,'w')}">${at(el,'name')}</q-text></b></div><div><q-text w="33.500">TMS </q-text><a><q-text w="44.500">details</q-text></a><q-text w="8">, </q-text><a><q-text w="116">report a problem</q-text></a></div></div><i class="dot"></i><q-button style="width:38px;height:24px"><q-text w="27.500">Add</q-text></q-button>`);

/* ---------- map canvas ---------- */
const A=`M176 18L152 62 175 127 188 150 350 224 610 268 758 18M610 268L549 511 456 593 442 590 133 371 116 314 128 271 138 265 350 224M138 265L81 186 26 216 8 217M26 216L74 268 128 271M74 268L42 335 8 368 133 371M42 335L116 314M81 186L93 168 128 153 188 150M93 168L56 121 8 146M56 121L78 101 97 97 128 153M97 97L106 88 175 127M106 88L112 62 152 62M122 18V62M100 18L94 40 112 62M94 40L50 44 50 55 48 68 41 96 56 121M8 24L35 30 48 18M35 30L50 44M8 82L48 68M8 95L41 96M50 55L72 71 84 69 112 62M72 71L78 101M84 69L92 99M8 536L194 577 442 590M194 577L98 673 68 703 8 703M98 673L8 968M68 703L46 734 8 795M46 734L24 710 24 703M24 710L8 770M456 593L448 622 346 890 277 958 250 977 8 978M250 977V1222M448 622L657 937 702 957M549 511L749 666 768 676 864 692 996 707 1138 716 1168 694 1290 576M749 666L740 850 736 885 702 957M768 676L824 815 880 897 874 934 886 982M844 684L1290 238M864 692L955 892 958 934M996 707L955 892M880 897L957 933 1094 936 1130 783 1138 716M1130 783L1290 963M1168 694L1290 887M1193 18L1290 203M346 890L442 967 528 1016 606 1010 642 1002 704 963 702 957M442 967L495 1120 512 1183 445 1183M495 1120L562 1150M277 958L445 1183M528 1016L552 1074 562 1135M528 1016L648 1090 690 1054M606 1010L690 1054M552 1074L612 1133M657 937L650 970 642 1002M666 945L660 990M655 963H667M740 850L784 948M824 815L790 948M812 865L790 950M828 825L822 948M736 885L752 958M727 905L735 958M702 957L752 960 784 948 826 950 874 934M886 982L856 986 826 950M957 933L915 1001 886 982M915 1001L930 1020 948 1022 1072 980 1094 945 1094 936M1094 945L1119 965 1265 985 1290 978M1119 965L1160 1040 1163 1134 1144 1170M1160 1040L1246 1040 1290 1050M1160 1040L1232 1078 1252 1075M1265 985L1246 1040 1252 1075 1290 1060M1232 1078L1165 1132 1240 1128M1252 1075L1258 1100 1240 1128 1242 1150M1258 1100L1290 1120M1072 980L1056 1030 1058 1074 1144 1170M948 1022L974 1060 1000 1062 1056 1030M925 1015L910 1080M925 1015V1090M938 1022V1110M1000 1062L985 1110M1000 1062L1010 1110M1083 1102L1050 1140M1144 1170L1070 1155`;
const B=`M0 148L41 226 157 443 224 481 370 535 403 542 532 526 798 523 844 520 908 520 919 523 1124 554 1166 452 1146 226 1205 18M0 266L41 226M157 443L2 605 80 926M224 481L166 745 134 858 119 893 108 920 80 926 62 936 36 973 0 990M370 535L271 828 250 910 249 995 346 1058 422 966 431 884 403 542M166 745L182 895M134 858L165 905M119 893L165 910M108 920L163 925M271 828L195 900M250 912L200 918M249 980L200 930M345 18L472 115 517 166 532 526M472 115H505L499 38 485 18 600 22 598 50 582 62 555 66 499 38 532 95 513 122 517 166 553 125 593 133 617 161 844 520M505 115L513 122M532 95L524 160M532 95L548 102 564 90 565 72 555 66M548 102L553 125M564 90L590 95 615 92 617 161M590 95L593 133M550 100L592 122M582 62L590 95M598 50L601 65 625 82 638 79 613 18M638 79L702 107 691 18M702 107L908 520M615 92L625 82M565 72H580L601 65M947 18L1146 226M1166 452L1272 396M1140 518L1272 503M1124 554L1160 638 1187 708 1272 850M1160 638L1272 604M1187 708L833 909 735 985 676 1108 687 1137 1272 1077M798 523L586 922M919 523L604 930M431 884L503 912 586 923 604 930 657 952 833 909M503 912L548 940 560 960 518 1021 422 966M548 940L575 950M657 952L615 975 586 1010 569 1063 518 1021M586 1010L572 970M586 1010L590 970M569 1063L619 1054 735 985M619 1054L676 1108M563 1095L682 1121M569 1063L563 1095 538 1200M346 1058L343 1102 378 1200M343 1102L164 1126M249 995L211 997 152 1007 70 1022 62 1048M211 997L160 945M228 995L180 935M228 995L163 1122M134 958L152 1007 154 1098 163 1122 157 1160M108 920L134 958 165 948M70 1022L36 973M48 992L15 1040M62 1048L0 1040M62 1048L0 1066M62 1048L154 1098M62 1048L58 1098 75 1115 163 1126M58 1098L20 1108 0 1095M75 1115L65 1138 48 1190M65 1138L130 1170 157 1160M20 1108L14 1145 18 1180M687 1137L630 1200M0 1012L20 985`;
const C=`M8 170L147 313M250 0V217L320 230 410 240M250 217L245 240 200 317 8 307M245 240L311 283 405 310M320 230L382 262M311 283L355 312 382 352 343 398M200 317L212 400 242 498 207 610 162 900M147 313L115 350 50 385M62 313L40 378M147 316L205 330M208 370L70 400M212 403L70 425M242 498L350 463 428 457 452 454 475 465 535 495 578 555 600 598 662 900M428 457L360 900M452 454L440 405M8 455L20 453 80 475 175 585M66 438L207 600M20 453L207 610M40 415L8 430M748 430L757 490 865 900M863 480L878 497 898 755 885 900M898 755L1006 555M898 755L900 775 1130 510M1130 530L992 900M1147 520L1175 900M1160 520L1238 645M1185 525L1238 645M1228 370L1222 500 1238 645 1258 735M1222 492H1185M1228 368L1290 368M1235 250V365M1144 165L1205 183 1235 240 1290 205M1205 183L1210 150M1133 270L1228 368 1142 402 1085 398M1140 402L1128 480M1142 402L1158 478M1133 270L1144 165M1015 470L1005 550 950 540M1097 470L1115 490M1205 183L1260 178 1290 190M578 555L655 400M585 545L680 390M653 525L700 435M653 525L665 470M565 530L625 400M655 470L650 440`;
const D=`M157 155L172 190 148 262 65 243 60 197 130 165M60 197L50 185 20 175 0 200M172 190L402 264 343 97M402 264L479 395 507 330 563 90M507 330L687 132M479 395L493 505 680 900M148 262L212 379 493 504M212 379H17L0 370M17 379L168 900M65 243L0 365M0 232H62M0 243L15 232`;
const E='M484 750L441 1023M550 750L508 1023M651 750L698 982 700 1023M718 750L723 771 707 897 698 982M725 750L723 771M761 750L707 897M822 750L843 1023M849 695L864 750 935 1023M906 750L986 1023M1077 750L1207 1023';
const BC='M1290 140L1175 142 1187 155 1180 170 1168 168 1160 160 1148 165 1163 190 1170 212 1046 210 1030 195 1017 180 1006 163 960 158 915 135 888 126 858 183 853 212 856 240 845 262 800 290 790 305 800 345 803 370 766 400 740 408 728 413 708 408 694 415 655 414 630 410 548 410 480 402 398 399 378 395 366 398 341 399 352 418 353 435 335 456 305 457 297 470 290 485 275 496 262 496 245 483 215 473 203 475 190 485 134 489 120 477 90 475 70 487 74 601 170 585 290 572 470 566 600 567 611 563 618 566 830 559 940 560 1000 563 1070 572 1097 575 1093 555 1100 538 1115 533 1290 530';
const BD='M0 140L25 140 100 149 270 149 625 152 670 149 730 153 834 154 834 165 838 190 822 213 803 218 788 216 784 230 775 243 783 250 783 262 790 285 797 300 797 323 820 327 831 322 833 335 840 346 858 345 863 330 885 313 920 296 930 285 940 280 970 291 995 288 1015 300 1022 315 1034 332 1025 357 1003 377 962 393 950 407 928 419 936 451 955 458 995 470 1017 468 1022 485 1030 492 1045 495 1050 505 1063 512 1068 502 1085 497 1100 500 1133 509 1145 503 1165 505 1190 503 1212 518 1212 603 1000 579 800 541 650 516 570 507 420 505 330 518 235 526 0 531';
let seed=11;const rnd=()=>(seed=(seed*1103515245+12345)&0x7fffffff)/0x7fffffff;
function voronoi(pts,box){
  let d='';
  pts.forEach((p,i)=>{
    let poly=[[box[0],box[1]],[box[2],box[1]],[box[2],box[3]],[box[0],box[3]]];
    const near=pts.map((q,j)=>[j,(q[0]-p[0])**2+(q[1]-p[1])**2]).filter(e=>e[0]!==i).sort((a,b)=>a[1]-b[1]).slice(0,40);
    for(const [j] of near){
      const q=pts[j],mx=(p[0]+q[0])/2,my=(p[1]+q[1])/2,nx=q[0]-p[0],ny=q[1]-p[1],f=v=>(v[0]-mx)*nx+(v[1]-my)*ny,o=[];
      poly.forEach((a,k)=>{const b=poly[(k+1)%poly.length],fa=f(a),fb=f(b);
        if(fa<=0)o.push(a);
        if(fa*fb<0){const t=fa/(fa-fb);o.push([a[0]+(b[0]-a[0])*t,a[1]+(b[1]-a[1])*t]);}});
      poly=o;
    }
    d+='M'+poly.map(v=>v[0].toFixed(1)+' '+v[1].toFixed(1)).join('L')+'Z';
  });
  return d;
}
const spots=[[845,1135,30,10],[932,1092,36,16],[790,968,22,9],[420,1280,32,18],[885,1070,16,10],[685,1145,26,15],[1050,1425,28,14]];
const radius=(x,y)=>{
  for(const s of spots)if(Math.hypot(x-s[0],y-s[1])<s[2])return s[3];
  if(x>1000&&y>1300)return 38;
  if(x>860&&y>1175)return 56;
  if(y>1370)return 44;
  if(x>960)return 30;
  return y<1200&&x>690?25:32;
};
function scatter(x0,y0,x1,y1,rf,tries){
  const pts=[];
  for(let k=0;k<tries;k++){const x=x0+rnd()*(x1-x0),y=y0+rnd()*(y1-y0),r=rf(x,y)*(.7+.6*rnd());
    if(pts.every(p=>Math.hypot(p[0]-x,p[1]-y)>Math.max(r,p[2]*.8)))pts.push([x,y,r]);}
  return pts;
}
const region='528,1016 642,1002 704,963 784,948 826,950 874,934 886,982 915,1001 948,1022 974,1060 1000,1062 1056,1030 1058,1074 1144,1170 1133,1275 1228,1373 1142,1407 1115,1495 1012,1555 940,1500 878,1502 863,1485 775,1435 720,1435 655,1475 578,1555 535,1500 475,1470 440,1430 345,1403 382,1357 355,1317 311,1288 382,1267 410,1245 445,1183 512,1183 562,1135 552,1074';
const dense=voronoi(scatter(300,920,1240,1580,radius,3200),[280,900,1260,1600]);
const knots=[[1442,918,23],[1846,957,21],[1150,1502,36],[40,1420,32]].map(([x,y,r],i)=>{
  const d=voronoi(scatter(x-r,y-r,x+r,y+r,()=>r/3,90),[x-r,y-r,x+r,y+r]);
  return `<clipPath id="k${i}"><circle cx="${x}" cy="${y}" r="${r-3}"/></clipPath><path clip-path="url(#k${i})" d="${d}"/>`;
}).join('');
const schools=[[926,143],[935,150],[1238,144],[1065,216],[960,231],[999,273],[843,270],[837,282],[975,339],[1080,366],[882,360],[885,369],[795,390],[1047,420],[1050,434],[1049,424],[1069,423],[1072,420],[1068,468],[749,474],[747,474],[1250,495],[1968,174]];
def('q-map',':host{border:1px solid #bfbab5;background:#f3ecf4;overflow:hidden}svg{display:block}path,polygon{vector-effect:non-scaling-stroke}',()=>`
<svg width="841" height="902" viewBox="433 121 841 902" fill="none" stroke="#cbc5cd" stroke-width="1.100">
<g transform="translate(430 115) scale(.33333)"><path d="${A}"/><path transform="translate(1260 0)" d="${B}"/>
<g stroke="#d2cdd4" stroke-width="1"><clipPath id="rg"><polygon points="${region}"/></clipPath><path clip-path="url(#rg)" d="${dense}"/><polygon points="${region}"/>${knots}</g></g>
<g transform="translate(430 450) scale(.33333)"><path d="${C}"/><path transform="translate(1260 0)" d="${D}"/></g><path d="${E}"/>
<g transform="translate(430 450) scale(.33333)" stroke="#111" stroke-width="1.250"><path d="${BC}"/><path transform="translate(1260 0)" d="${BD}"/></g>
<g fill="#2bb000" stroke="#0c2a04" stroke-width="1.200">${schools.map(p=>`<circle cx="${(430+p[0]/3).toFixed(1)}" cy="${(450+p[1]/3).toFixed(1)}" r="3.800"/>`).join('')}</g></svg>`);

/* ---------- vertical tool strip ---------- */
def('q-strip',':host{width:59px;flex:none;padding-top:3px}.r{display:flex;align-items:center;height:36.050px;padding-left:7px}q-icon+q-icon{margin-left:10px;margin-top:4px}',()=>{
  const row=(n,d)=>`<div class="r"><q-icon n="${n}"></q-icon>${d?'<q-icon n="d" s="12"></q-icon>':''}</div>`;
  return '<q-grip style="height:7px;margin-left:-3px"></q-grip>'+[['vec'],['ras'],['spl'],['pg',1],['wms',1],['wcs'],['wfs',1],['comma'],['vrt'],['gpkg',1]].map(a=>row(...a)).join('').replace('<div class="r">','<div class="r" style="margin-top:1px">')+'<q-grip style="height:12px;margin-left:-3px"></q-grip>';
});

/* ---------- left docks ---------- */
def('q-left',`:host{width:367px;flex:none;display:flex;flex-direction:column}.box{border:1px solid #bfbab5;background:#fff;flex:none;overflow:hidden}
 .tabs{display:flex;align-items:flex-start}.tab{border:1px solid #bfbab5;border-top:0;border-radius:0 0 4px 4px;display:flex;align-items:center;justify-content:center}`,()=>`
<q-title style="height:25px"><q-text w="122">Layer Order Panel</q-text></q-title>
<q-row style="align-items:stretch;height:83px;gap:3px"><div class="box" style="width:351px;background:#ebeae8;padding-top:1px">
<q-order tick><q-text w="50">schools</q-text></q-order><q-order tick><q-text w="157">lagos_admin_boundary</q-text></q-order><q-order tick><q-text w="118">Voronoi polygons</q-text></q-order><q-order><q-text w="262">nga_admbnda_adm1_osgof_20190417</q-text></q-order></div><q-scroll len="34"></q-scroll></q-row>
<q-row style="height:28px;padding:6px 0 0 2px;gap:8px"><q-check></q-check><q-text w="162">Control rendering order</q-text></q-row><q-grip style="height:6px"></q-grip>
<q-title style="height:25px"><q-text w="85">Layers Panel</q-text></q-title>
<q-toolbar style="height:31px;margin-bottom:1px" x0="59" s="15" items="style:75:26 addgroup:103 eye:130 d:142 funnel:165 epsf:194 d:217 expand:241 collapse:269 rem:297"></q-toolbar>
<div class="box" style="height:206px">
<q-layer on icon="dot"><q-text b w="53">schools</q-text></q-layer><q-layer on sel icon="sq0"><q-text b w="164">lagos_admin_boundary</q-text></q-layer><q-layer on icon="sq1"><q-text b w="125">Voronoi polygons</q-text></q-layer><q-layer icon="sq2"><q-text b w="269">nga_admbnda_adm1_osgof_20190417</q-text></q-layer><q-layer open icon="sat"><q-text b w="116">Google Satellite</q-text></q-layer></div>
<q-grip style="height:6px"></q-grip>
<q-title><q-text w="98">Browser Panel</q-text></q-title>
<q-toolbar style="height:30px;margin-bottom:1px" x0="59" s="15" items="addl:75 refresh:103 funnel:131 collapse:159 info:187"></q-toolbar>
<div class="box" style="height:406px">${[['folder','Home',40,1],['fav','Favourites',70],['folder','/',6,1],['db2','DB2',28],['mssql','MSSQL',48],['elephant','PostGIS',52,1],['feather','SpatiaLite',68],['afs','ArcGisFeatureServer',140],['ams','ArcGisMapServer',116],['ows','OWS',33],['xyz','Tile Server (XYZ)',112],['wcs0','WCS',31],['wfs0','WFS',30],['xyz','WMS',35]].map(a=>`<q-node icon="${a[0]}" ${a[3]?'kids':''}><q-text w="${a[2]}">${a[1]}</q-text></q-node>`).join('')}</div>
<div class="tabs"><div class="tab" style="width:93px;height:27px;background:linear-gradient(#dddbd9,#f0efed)"><q-text w="76"><u>Q</u>GIS Cloud</q-text></div><div class="tab" style="width:115px;height:30px;background:#fbfbfa;margin-left:-1px"><q-text w="99">Browser Panel</q-text></div></div>`);

/* ---------- right docks ---------- */
def('q-right',`:host{width:572px;flex:none;display:flex;flex-direction:column;overflow:hidden}
 .style{display:flex;margin-top:4px;height:493px;flex:none}.side{width:38px;margin-left:3px;display:flex;flex-direction:column}.dark{flex:1;background:#5d5d5d;display:flex;flex-direction:column;align-items:center;padding-top:6px}
 .body{width:526px;margin-left:4px;padding-top:3px;display:flex;flex-direction:column}.scr{display:flex;height:237px;margin-top:6px;margin-left:-1px;justify-content:space-between;flex:none}.in{width:510px}
 .tree{width:256px;height:100px;border:1px solid #bfbab5;background:#fff}.tree div{height:19px;display:flex;align-items:center;color:#3c3c3c}
 .prev{width:62px;height:62px;border:1.500px solid #111;margin:20px 0 0 100px}hr{height:1px;border:0;background:#bfbab5;margin:7px 0 0;flex:none}
 .list{display:flex;height:213px;margin-top:7px;gap:3px;flex:none}.rows{width:557px;border:1px solid #bfbab5;overflow:hidden}a{color:#00f}`,()=>`
<q-title style="padding-right:2px"><q-text w="87">Layer Styling</q-text></q-title>
<q-combo style="margin:3px 3px 0 4px"><q-icon n="polyg" s="16" h="14" style="margin-right:3px;margin-top:-3px"></q-icon><q-text w="157">lagos_admin_boundary</q-text></q-combo>
<div class="style"><div class="side"><div style="height:42px;padding:8px 0 0 7px;flex:none"><q-icon n="style" s="29" h="26"></q-icon></div><div class="dark"><q-icon n="label" s="28" style="margin-top:3px"></q-icon><q-icon n="brushes" s="30" style="margin-top:9px"></q-icon><q-icon n="hist" s="26" style="margin-top:11px"></q-icon></div></div>
<div class="body"><q-combo><q-icon n="single" s="14" style="margin-right:4px;margin-left:1px"></q-icon><q-text w="93">Single symbol</q-text></q-combo>
<div class="scr"><div class="in">
<div style="display:flex"><div class="tree"><div style="background:linear-gradient(#ecebe9,#dbd9d6);padding-left:6px;color:#222"><q-icon n="d" s="13"></q-icon><q-icon n="sq3" s="16" style="margin:0 6px 0 4px"></q-icon><q-text b w="22">Fill</q-text></div><div style="padding-left:43px"><q-icon n="sq4" s="16" style="margin-right:6px"></q-icon><q-text w="67">Simple fill</q-text></div></div><div class="prev"></div></div>
<div style="display:flex;gap:8px;margin:7px 0 0 1px">${['add','minus','unlock','dup','up','down'].map((n,i)=>`<q-button ${i?'off':''} style="width:36px;height:25px"><q-icon n="${n}" s="15"></q-icon></q-button>`).join('')}</div><hr>
<q-row style="margin-top:9px"><div style="width:117px"><q-text w="28">Unit</q-text></div><q-combo style="flex:1"><q-text w="70">Millimeter</q-text></q-combo></q-row>
<q-row style="height:29px"><div style="width:119px"><q-text w="115">Transparency 0%</q-text></div><q-slider style="flex:1"></q-slider></q-row>
<q-row style="height:27px"><div style="width:117px"><q-text w="36">Color</q-text></div><q-button style="width:372px;height:27px"><div style="width:364px;height:17px;border-radius:2px;background:#8086ba"></div></q-button><q-button style="width:19px;height:27px;margin-left:2px"><q-icon n="d" s="13"></q-icon></q-button></q-row>
</div><q-scroll top="0" len="112" style="margin-right:0"></q-scroll></div>
<q-row style="height:31px"><q-icon n="D" s="13" style="margin:0 8px 0 0"></q-icon><q-text b w="113" style="color:#333">Layer rendering</q-text></q-row>
<q-row style="height:26px;padding-left:7px"><div style="width:169px"><q-text w="129">Layer transparency</q-text></div><q-slider style="width:277px"></q-slider><q-spin style="width:60px;margin-left:9px"><q-text>0</q-text></q-spin></q-row>
<q-row style="height:33px;margin-top:5px;padding-left:7px"><div style="width:167px"><q-text w="142">Layer blending mode</q-text></div><q-combo style="width:110px"><q-text w="50">Normal</q-text></q-combo></q-row>
<q-row style="height:33px;padding-left:7px"><div style="width:167px"><q-text w="158">Feature blending mode</q-text></div><q-combo style="width:110px"><q-text w="50">Normal</q-text></q-combo></q-row>
<q-row style="height:21px;padding:0 5px 0 9px"><q-check></q-check><div style="flex:1;padding-left:8px"><q-text w="88">Draw effects</q-text></div><q-button off style="width:20px;height:15px"><q-icon n="fx" s="13"></q-icon></q-button></q-row>
<q-row style="height:31px;padding:0 5px 0 9px"><q-check></q-check><div style="flex:1;padding-left:8px"><q-text w="217">Control feature rendering order</q-text></div><q-button off style="width:20px;height:23px"><q-icon n="az" s="15"></q-icon></q-button></q-row>
<q-row style="height:26px;margin-top:14px;padding-right:1px"><q-button style="width:20px;height:22px"><q-icon n="undo" s="13"></q-icon></q-button><q-button style="width:20px;height:22px;margin-left:8px"><q-icon n="redo" s="13"></q-icon></q-button><div style="flex:1"></div><q-check on></q-check><q-text w="79" style="margin:0 14px 0 7px">Live update</q-text><q-button style="width:84px;height:26px"><q-text w="39">Apply</q-text></q-button></q-row>
</div></div>
<q-grip style="height:8px;margin-top:2px"></q-grip>
<q-title style="padding-right:2px;margin-top:-1px;height:25px"><q-text w="82">Search QMS</q-text></q-title>
<div style="height:26px;border:1px solid #a19d99;border-radius:4px;background:#fff;margin:0 0 0 1px;display:flex;align-items:center;padding:1px 5px 0 4px;color:#333;flex:none"><q-text w="34">goog</q-text><div style="flex:1"></div><q-icon n="clear" s="14" h="11"></q-icon></div>
<q-row style="margin-top:8px;justify-content:flex-end;gap:8px"><q-button style="width:122px;height:26px"><q-text w="104">Filter by extent</q-text></q-button><q-combo style="width:83px"><q-text w="18">All</q-text></q-combo></q-row>
<div class="list" style="margin-top:6px"><div class="rows"><q-service alt icon="gmap" name="Google Satellite" w="116"></q-service><q-service icon="gm" name="Google Satellite Hybrid" w="168"></q-service><q-service alt icon="gm" name="Google Terrain" w="105"></q-service><q-service icon="gm" name="Google Terrain Hybrid" w="157"></q-service></div><q-scroll top="106" len="34"></q-scroll></div>
<div style="border:1px solid #bfbab5;border-right:0;height:32px;margin-top:3px;display:flex;align-items:center;padding-left:172px;white-space:pre;flex:none"><q-icon n="bell" s="12"></q-icon><a style="margin:0 4px 0 6px"><q-text w="97">Fresh geodata</q-text></a><q-text w="107">for your project</q-text></div>`);

def('q-status',`:host{display:flex;align-items:center;height:32px;border-top:1px solid #cfccc8;box-shadow:inset 0 1px #fff;padding:2px 0 0 5px}`,()=>`
<q-text w="183">Updated local data sources</q-text><q-text w="76" style="margin-left:537px">Coordinate</q-text>
<div style="width:216px;height:26px;border:1px solid #a19d99;border-radius:4px;background:#fff;margin-left:5px;display:flex;align-items:center;justify-content:center;color:#333;flex:none"><q-text w="78">3.523,6.519</q-text></div>
<q-icon n="mouse" s="15" style="margin-left:4px"></q-icon><q-text w="35" style="margin-left:13px">Scale</q-text>
<q-spin drop bw="23" style="width:116px;margin-left:6px"><q-text w="65">1:798,471</q-text></q-spin><q-icon n="lock" s="15" h="17" style="margin-left:5px"></q-icon>
<q-text w="66" style="margin-left:12px">Magnifier</q-text><q-spin style="width:90px;margin-left:5px"><q-text w="38">100%</q-text></q-spin>
<q-text w="59" style="margin-left:10px">Rotation</q-text><q-spin style="width:90px;margin-left:11px"><q-text w="20">0.0</q-text></q-spin>
<q-check on style="margin-left:9px"></q-check><q-text w="49" style="margin-left:8px">Render</q-text>
<q-icon n="crs" s="16" style="margin-left:17px"></q-icon><q-text w="114" style="margin-left:5px">EPSG:4326 (OTF)</q-text><q-icon n="msg" s="17" style="margin-left:18px"></q-icon>`);

def('q-window',`:host{width:1853px;height:1055px;display:flex;flex-direction:column;overflow:hidden}.main{display:flex;height:904px;flex:none}.sp{width:6px;flex:none;display:flex;align-items:center;justify-content:center}`,()=>`
<q-toolbar items="|:5 file:28 open:64 save:100 saveas:137 newcomp:172 composer:208 |:233 hand:257:34 panmap:293 zin:329 zout:364 z11:401 zfull:438 zsel:473 zlay:509 zlast:545 znext:581 newbook:618 book:653 refresh:689 |:715 identify:738 gear:773 dl:802 select:829 d:859 selexp:887 d:915 desel:943 table:978 abacus:1014 sigma:1050 ruler:1086 d:1114 tip:1142 textann:1178 d:1206 |:1224 help:1247"></q-toolbar>
<q-toolbar items="|:5 pencils:28 dl:44 pencil:70 savegrey:106 addpoly:142 addcurve:179 dl:207 movef:234 node:271 trash:306 cut:343 copy:378 paste:414 |:440 label:462 pie:499 labelmove:535 tpin:572 teye:608 tmove:643 trot:680 tedit:716 |:741 red:764 qms:799 d:816 qmss:842:34 csw:879 |:904 python:927 earth:963 share:999"></q-toolbar>
<q-toolbar items="|:5 |:18 recthand:41 |:67 osm:90 |:116 mag:138.500"><q-combo style="width:83px;margin-left:7.500px"></q-combo><div style="width:767px;height:25px;margin-left:1px;border:1px solid #c9c6c2;border-radius:4px;background:#ebeae8;display:flex;align-items:center;padding-left:4px;color:#bdbab7"><q-text w="247">Search disabled: check configuration</q-text></div></q-toolbar>
<div class="main"><q-strip></q-strip><q-left></q-left><div class="sp"><q-grip v></q-grip></div><q-map style="width:843px;flex:none"></q-map><div class="sp"><q-grip v></q-grip></div><q-right></q-right></div><q-status></q-status>`);
</script>
</body>
</html>
